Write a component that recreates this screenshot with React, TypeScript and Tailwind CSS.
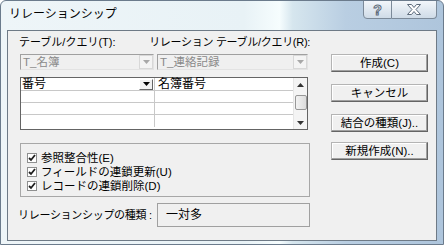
import React from "react";

const font = { fontFamily: '"Liberation Sans", "Noto Sans CJK JP", sans-serif' };

const Arrow = ({ color = "#000" }: { color?: string }) => (
  <svg width="7" height="4" viewBox="0 0 7 4">
    <path d="M0 0h7L3.5 4z" fill={color} />
  </svg>
);

const Combo = ({ text, width }: { text: string; width: string }) => (
  <div
    className={`${width} h-[16px] flex items-center border border-t-[#a0a0a0] border-l-[#a0a0a0] border-r-[#e3e3e3] border-b-[#e3e3e3] bg-[#f0f0f0]`}
  >
    <span className="flex-1 pl-[2px] text-[11.5px] leading-[14px] text-[#8a8a8a] whitespace-nowrap">
      {text}
    </span>
    <div className="w-[14px] h-[14px] flex items-center justify-center border border-[#d8d8d8] bg-[#f4f4f4]">
      <Arrow color="#a8a8a8" />
    </div>
  </div>
);

const Check = ({ label }: { label: string }) => (
  <div className="flex items-center h-[14px]">
    <div className="w-[10px] h-[10px] border border-[#8e8f8f] bg-white flex items-center justify-center">
      <svg width="8" height="8" viewBox="0 0 8 8">
        <path d="M1 4l2 2 4-5" stroke="#1e1e1e" strokeWidth="1.8" fill="none" />
      </svg>
    </div>
    <span className="ml-[4px] text-[11.5px] leading-[13px] text-black whitespace-nowrap">
      {label}
    </span>
  </div>
);

const Button = ({ label, className = "" }: { label: string; className?: string }) => (
  <div
    className={`w-[97px] h-[18px] flex items-center justify-center bg-[#f0f0f0] border border-t-[#b4b4b4] border-l-[#b4b4b4] border-r-[#646464] border-b-[#646464] shadow-[inset_-1px_-1px_0_#a0a0a0,inset_1px_1px_0_#ffffff] text-[11.5px] leading-[14px] text-black whitespace-nowrap ${className}`}
  >
    {label}
  </div>
);

const GridRow = ({ last }: { last?: boolean }) => (
  <div className={`flex h-[12px] ${last ? "" : "border-b border-[#c8c8c8]"}`}>
    <div className="w-[134px] border-r border-[#c8c8c8]" />
    <div className="flex-1" />
  </div>
);

export default function App() {
  return (
    <div
      style={font}
      className="w-[444px] h-[245px] flex flex-col overflow-hidden rounded-t-[6px] border border-[#6b7b8c] bg-[linear-gradient(90deg,#eef5f8_0%,#e8f2f6_55%,#f6fdfe_63%,#d6e6ee_66%,#b9cee2_78%,#aec5dc_100%)]"
    >
      {/* title bar */}
      <div className="h-[29px] flex items-start justify-between">
        <span className="ml-[8px] mt-[6px] text-[12px] leading-[15px] text-black">
          リレーションシップ
        </span>
        <div className="flex mr-[6px] -mt-[1px]">
          <div className="w-[29px] h-[19px] flex items-center justify-center border border-[#7c8a99] rounded-bl-[4px] bg-[linear-gradient(180deg,#f2f6fa,#cfdbe7)]">
            <span className="text-[14px] leading-[14px] font-bold text-white [-webkit-text-stroke:1px_#5d6b7b]">?</span>
          </div>
          <div className="w-[45px] h-[19px] flex items-center justify-center border border-l-0 border-[#7c8a99] rounded-br-[4px] bg-[linear-gradient(180deg,#f2f6fa,#cfdbe7)]">
            <svg width="14" height="11" viewBox="0 0 14 11">
              <path
                d="M0.5 0.5h4l2.5 3 2.5-3h4l-4.5 5 4.5 5h-4l-2.5-3-2.5 3h-4l4.5-5z"
                fill="#fff"
                stroke="#5d6b7b"
              />
            </svg>
          </div>
        </div>
      </div>

      {/* client area */}
      <div className="ml-[6px] w-[430px] h-[211px] border border-[#6e7a86] bg-[#f0f0f0] flex">
        <div className="ml-[12px] w-[290px] flex flex-col">
          <div className="mt-[4px] flex h-[14px] -ml-[1px] text-[11px] leading-[14px] text-black whitespace-nowrap">
            <span className="w-[136px]">テーブル/クエリ(T):</span>
            <span className="tracking-[-0.3px]">リレーション テーブル/クエリ(R):</span>
          </div>

          <div className="mt-[5px] flex gap-[3px]">
            <Combo text="T_名簿" width="w-[134px]" />
            <Combo text="T_連絡記録" width="w-[151px]" />
          </div>

          <div className="mt-[7px] w-[288px] h-[53px] border border-[#646464] bg-white flex">
            <div className="flex-1 flex flex-col">
              <div className="flex h-[13px] border-b border-[#c8c8c8]">
                <div className="w-[134px] border-r border-[#c8c8c8] flex items-center">
                  <span className="flex-1 pl-[1px] text-[12px] leading-[12px] text-black">番号</span>
                  <div className="w-[14px] h-[11px] mr-[1px] flex items-center justify-center bg-[#f0f0f0] border border-t-white border-l-white border-r-[#646464] border-b-[#646464]">
                    <Arrow />
                  </div>
                </div>
                <span className="pl-[3px] text-[12px] leading-[12px] text-black">名簿番号</span>
              </div>
              <GridRow />
              <GridRow />
              <GridRow last />
            </div>
            <div className="w-[14px] bg-[#f4f4f4] border-l border-[#e6e6e6] flex flex-col items-center">
              <div className="h-[14px] flex items-center justify-center rotate-180">
                <Arrow color="#333" />
              </div>
              <div className="mt-[3px] w-[12px] h-[15px] rounded-[2px] border border-[#979797] bg-[linear-gradient(90deg,#f2f2f2,#dcdcdc)]" />
              <div className="flex-1" />
              <div className="h-[12px] flex items-center justify-center">
                <Arrow color="#333" />
              </div>
            </div>
          </div>

          <div className="mt-[13px] w-[290px] h-[54px] border border-[#a7a7a7] pl-[6px] pt-[7px] flex flex-col">
            <Check label="参照整合性(E)" />
            <Check label="フィールドの連鎖更新(U)" />
            <Check label="レコードの連鎖削除(D)" />
          </div>

          <div className="mt-[6px] flex items-center h-[24px]">
            <span className="-ml-[2px] w-[139px] text-[11px] leading-[14px] text-black whitespace-nowrap tracking-[-0.3px]">
              リレーションシップの種類 :
            </span>
            <div className="w-[153px] h-[24px] border border-[#a0a0a0] flex items-center pl-[8px] text-[12px] leading-[14px] text-black">
              一対多
            </div>
          </div>
        </div>

        <div className="ml-[21px] flex flex-col">
          <Button label="作成(C)" className="mt-[23px]" />
          <Button label="キャンセル" className="mt-[12px]" />
          <Button label="結合の種類(J).." className="mt-[12px]" />
          <Button label="新規作成(N).." className="mt-[10px]" />
        </div>
      </div>
    </div>
  );
}
